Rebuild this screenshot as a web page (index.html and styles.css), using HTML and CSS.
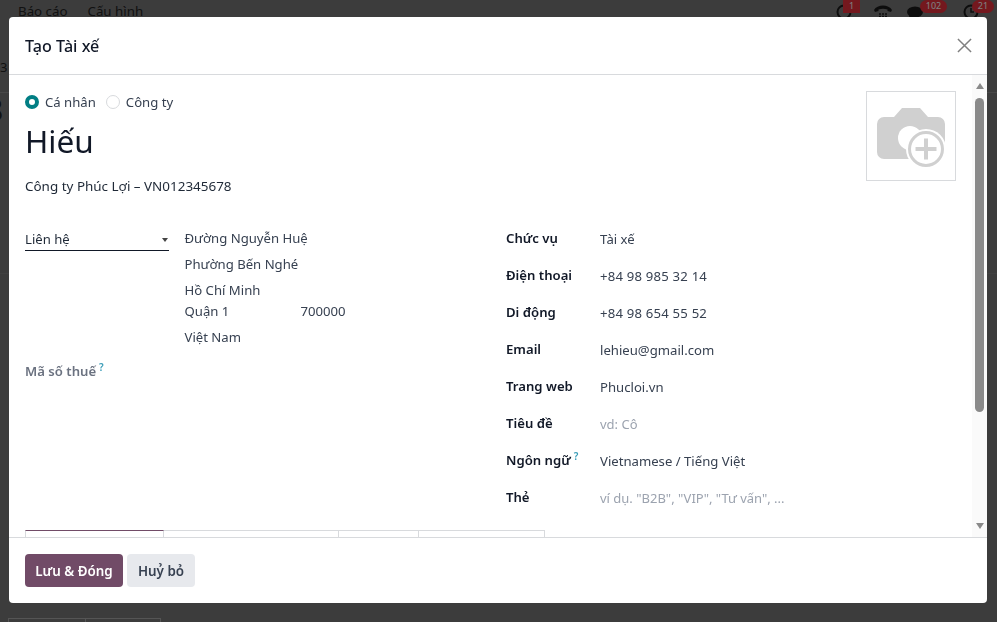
FILE: index.html
```html
<!DOCTYPE html>
<html lang="vi">
<head>
<meta charset="utf-8">
<title>Tạo Tài xế</title>
<link rel="stylesheet" href="styles.css">
</head>
<body>
<div class="page">
  <nav class="topbar">
    <span class="menu">Báo cáo</span>
    <span class="menu">Cấu hình</span>
    <span class="systray">
      <span class="tray-item tray-a"><svg class="tray-ic" viewBox="0 0 16 16"><circle cx="8" cy="8" r="6.5" fill="none" stroke="#1b1b1b" stroke-width="2"/><path d="M8 4v4h3" fill="none" stroke="#1b1b1b" stroke-width="1.5"/></svg><b class="badge badge-sq">1</b></span>
      <span class="tray-item tray-b"><svg class="tray-ic" viewBox="0 0 18 16"><path d="M0 6c3-6 15-6 18 0l-1 2-3.500-1V5.500c-3-1-6-1-9 0V7L1 8z" fill="#1b1b1b"/><path d="M5 10h2M8 10h2M11 10h2M5 12.500h2M8 12.500h2M11 12.500h2M5 15h2M8 15h2M11 15h2" stroke="#1b1b1b" stroke-width="1.500"/></svg></span>
      <span class="tray-item tray-c"><svg class="tray-ic" viewBox="0 0 16 16"><ellipse cx="8" cy="8" rx="8" ry="5.500" fill="#1b1b1b"/><path d="M3 11l-2 4 6-3z" fill="#1b1b1b"/></svg><b class="badge badge-c">102</b></span>
      <span class="tray-item tray-d"><svg class="tray-ic" viewBox="0 0 16 16"><circle cx="8" cy="8" r="6.5" fill="none" stroke="#1b1b1b" stroke-width="2"/><path d="M8 4v4h3" fill="none" stroke="#1b1b1b" stroke-width="1.5"/></svg><b class="badge badge-d">21</b></span>
    </span>
  </nav>
  <div class="crumb">3</div>
  <div class="bigdigit">8</div>
  <div class="sheet-line"></div>
  <div class="under-tabs"><span></span><span></span></div>
</div>

<div class="backdrop">
  <section class="modal">
    <header class="modal-head">
      <h4 class="modal-title">Tạo Tài xế</h4>
      <svg class="close" viewBox="0 0 16 16"><path d="M1 1l14 14M15 1L1 15" stroke="#808080" stroke-width="1.6" fill="none"/></svg>
    </header>
    <div class="modal-body">
      <div class="scroll-content">
        <div class="top">
          <div class="top-main">
            <div class="radios">
              <span class="radio radio-on"></span><span class="radio-label">Cá nhân</span>
              <span class="radio"></span><span class="radio-label">Công ty</span>
            </div>
            <h1 class="name">Hiếu</h1>
            <div class="company">Công ty Phúc Lợi – VN012345678</div>
          </div>
          <div class="avatar">
            <svg viewBox="0 0 68 60" class="avatar-ic">
              <path d="M7 9h10l8-9h18l8 9h10a7 7 0 0 1 7 7v28a7 7 0 0 1-7 7H7a7 7 0 0 1-7-7V16a7 7 0 0 1 7-7z" fill="#d0d0d0"/>
              <circle cx="33" cy="30" r="12" fill="#fff"/>
              <circle cx="49" cy="41" r="20" fill="#fff"/>
              <circle cx="49" cy="41" r="16.500" fill="none" stroke="#d0d0d0" stroke-width="3"/>
              <path d="M49 30.500v21M38.500 41h21" stroke="#d0d0d0" stroke-width="4"/>
            </svg>
          </div>
        </div>
        <div class="cols">
          <div class="col-left">
            <div class="address">
              <div class="select">Liên hệ<i class="caret"></i></div>
              <div class="addr-lines">
                <div class="addr addr-1">Đường Nguyễn Huệ</div>
                <div class="addr addr-2">Phường Bến Nghé</div>
                <div class="addr addr-3">Hồ Chí Minh</div>
                <div class="addr addr-4"><span class="district">Quận 1</span><span>700000</span></div>
                <div class="addr addr-5">Việt Nam</div>
              </div>
            </div>
            <div class="vat">Mã số thuế<sup class="help">?</sup></div>
          </div>
          <dl class="col-right">
            <div class="row"><dt>Chức vụ</dt><dd>Tài xế</dd></div>
            <div class="row"><dt>Điện thoại</dt><dd class="phone">+84 98 985 32 14</dd></div>
            <div class="row"><dt>Di động</dt><dd class="phone">+84 98 654 55 52</dd></div>
            <div class="row"><dt>Email</dt><dd>lehieu@gmail.com</dd></div>
            <div class="row"><dt>Trang web</dt><dd>Phucloi.vn</dd></div>
            <div class="row"><dt>Tiêu đề</dt><dd class="ph">vd: Cô</dd></div>
            <div class="row"><dt>Ngôn ngữ<sup class="help">?</sup></dt><dd>Vietnamese / Tiếng Việt</dd></div>
            <div class="row"><dt>Thẻ</dt><dd class="ph">ví dụ. "B2B", "VIP", "Tư vấn", ...</dd></div>
          </dl>
        </div>
        <div class="tabs">
          <span class="tab tab-1"></span><span class="tab tab-2"></span><span class="tab tab-3"></span><span class="tab tab-4"></span>
        </div>
      </div>
      <div class="scrollbar">
        <i class="arrow-up"></i>
        <i class="thumb"></i>
        <i class="arrow-down"></i>
      </div>
    </div>
    <footer class="modal-foot">
      <button class="btn btn-primary">Lưu &amp; Đóng</button>
      <button class="btn btn-secondary">Huỷ bỏ</button>
    </footer>
  </section>
</div>
</body>
</html>
```
FILE: styles.css
```css
* { box-sizing: border-box; }
html, body { margin: 0; height: 100%; overflow: hidden; }
body { font-family: "Noto Sans", "Liberation Sans", sans-serif; font-size: 13.15px; color: #374151; background: #787878; }

/* page behind the dialog */
.page { height: 622px; background: #787878; color: #222; overflow: hidden; }
.topbar { display: flex; height: 46px; padding: 0 18px; gap: 20px; line-height: 23px; font-size: 13.3px; }
.systray { margin-left: auto; display: flex; height: 20px; }
.tray-item { display: block; position: relative; width: 16px; height: 16px; margin-top: 4px; }
.tray-a { margin-right: 22px; }
.tray-b { margin-right: 15px; width: 18px; }
.tray-c { margin-right: 40px; }
.tray-ic { display: block; width: 100%; height: 100%; }
.badge { position: absolute; left: 9px; top: -4px; width: 22px; height: 13px; border-radius: 7px; background: #e8303c; color: #fff; font-size: 9px; font-weight: 400; line-height: 12px; text-align: center; }
.badge-sq { left: 7px; width: 17px; border-radius: 0; }
.badge-c { left: 13px; width: 27px; }
.crumb { height: 47px; padding-top: 14px; line-height: 14px; font-size: 13px; border-bottom: 1px solid #909090; }
.bigdigit { margin: 2px 0 0 -14px; font-size: 30px; line-height: 30px; }
.sheet-line { margin-top: 148px; border-top: 1px solid #828282; }
.under-tabs { display: flex; margin: 344px 0 0 8px; }
.under-tabs span { width: 78px; height: 4px; border: 1px solid #aaa; border-bottom: 0; }
.under-tabs span + span { width: 75px; border-left: 0; }

/* dialog */
.backdrop { position: fixed; inset: 0; background: rgba(0, 0, 0, .5); padding: 17px 10px 19px 9px; }
.modal { display: flex; flex-direction: column; height: 586px; background: #fff; border-radius: 4px; overflow: hidden; }
.modal-head { flex: none; display: flex; align-items: center; justify-content: space-between; height: 58px; padding: 0 15px 0 16px; border-bottom: 1px solid #d8dadd; }
.modal-title { margin: 0; font-size: 16.100px; font-weight: 500; color: #111827; }
.close { width: 15px; height: 15px; }

.modal-body { flex: 1; min-height: 0; display: flex; overflow: hidden; }
.scroll-content { flex: 1; min-width: 0; padding: 16px 16px 0; overflow: hidden; }
.top { display: flex; justify-content: space-between; height: 115px; }
.radios { display: flex; align-items: center; height: 22px; }
.radio { width: 14px; height: 14px; border-radius: 50%; border: 1px solid #d8dadd; background: #fff; }
.radio-on { border: 4px solid #017e84; }
.radio-label { margin: 0 10px 0 6px; color: #374151; }
.name { margin: 7px 0 0; font-size: 31.5px; font-weight: 400; line-height: 42px; color: #111827; }
.company { margin-top: 13px; line-height: 22px; font-size: 13.45px; color: #1f2937; }
.avatar { flex: none; width: 90px; height: 90px; border: 1px solid #d8dadd; display: flex; align-items: center; justify-content: center; }
.avatar-ic { width: 68px; height: 60px; margin-top: 4px; }

.cols { display: flex; margin-top: 15px; }
.col-left { width: 481px; flex: none; }
.address { display: flex; }
.select { position: relative; flex: none; width: 144px; height: 22px; margin-top: 8px; line-height: 21px; border-bottom: 1px solid #111827; color: #1f2937; }
.caret { position: absolute; right: 1px; top: 9px; border: 3.5px solid transparent; border-top: 4px solid #444; border-bottom: 0; }
.addr-lines { margin-left: 15.500px; }
.addr { line-height: 22px; }
.addr-1 { margin-top: 6px; }
.addr-2, .addr-3 { margin-top: 4px; }
.addr-4 { display: flex; margin-top: -1px; }
.district { width: 116px; }
.addr-5 { margin-top: 4px; }
.vat { margin-top: 12px; font-weight: 600; color: #6b7280; line-height: 22px; }
.help { color: #3b9db8; font-size: 10px; font-weight: 600; line-height: 0; margin-left: 3px; vertical-align: 5px; }

.col-right { margin: 0; flex: 1; padding-top: 8px; }
.row { display: flex; height: 37px; }
.row dt { width: 94px; font-weight: 600; color: #111827; line-height: 18px; }
.row dd { margin: 1px 0 0; line-height: 18px; color: #374151; }
.row dd.phone { letter-spacing: .2px; }
.row dd.ph { color: #9ca3af; font-size: 13px; }

.tabs { display: flex; margin-top: 5px; height: 30px; }
.tab { height: 30px; border: 1px solid #d8dadd; border-left: 0; }
.tab-1 { width: 139px; border-left: 1px solid #d8dadd; border-top-color: #714b67; }
.tab-2 { width: 175px; }
.tab-3 { width: 80px; }
.tab-4 { width: 126px; }

.scrollbar { flex: none; width: 15px; background: #fafafa; display: flex; flex-direction: column; align-items: center; }
.arrow-up { margin-top: 8px; border: 4.5px solid transparent; border-bottom: 6px solid #8a8a8a; border-top: 0; }
.thumb { margin-top: 9px; width: 9px; height: 314px; background: #8a8a8a; border-radius: 5px; }
.arrow-down { margin-top: auto; margin-bottom: 8px; border: 4.5px solid transparent; border-top: 6px solid #8a8a8a; border-bottom: 0; }

.modal-foot { flex: none; height: 66px; display: flex; align-items: center; gap: 4px; padding: 0 16px; border-top: 1px solid #d8dadd; }
.btn { height: 33px; border: 0; border-radius: 4px; font: 600 13.4px "Noto Sans", "Liberation Sans", sans-serif; }
.btn-primary { width: 98px; background: #714b67; color: #fff; }
.btn-secondary { width: 68px; background: #e7e9ed; color: #374151; }
```
